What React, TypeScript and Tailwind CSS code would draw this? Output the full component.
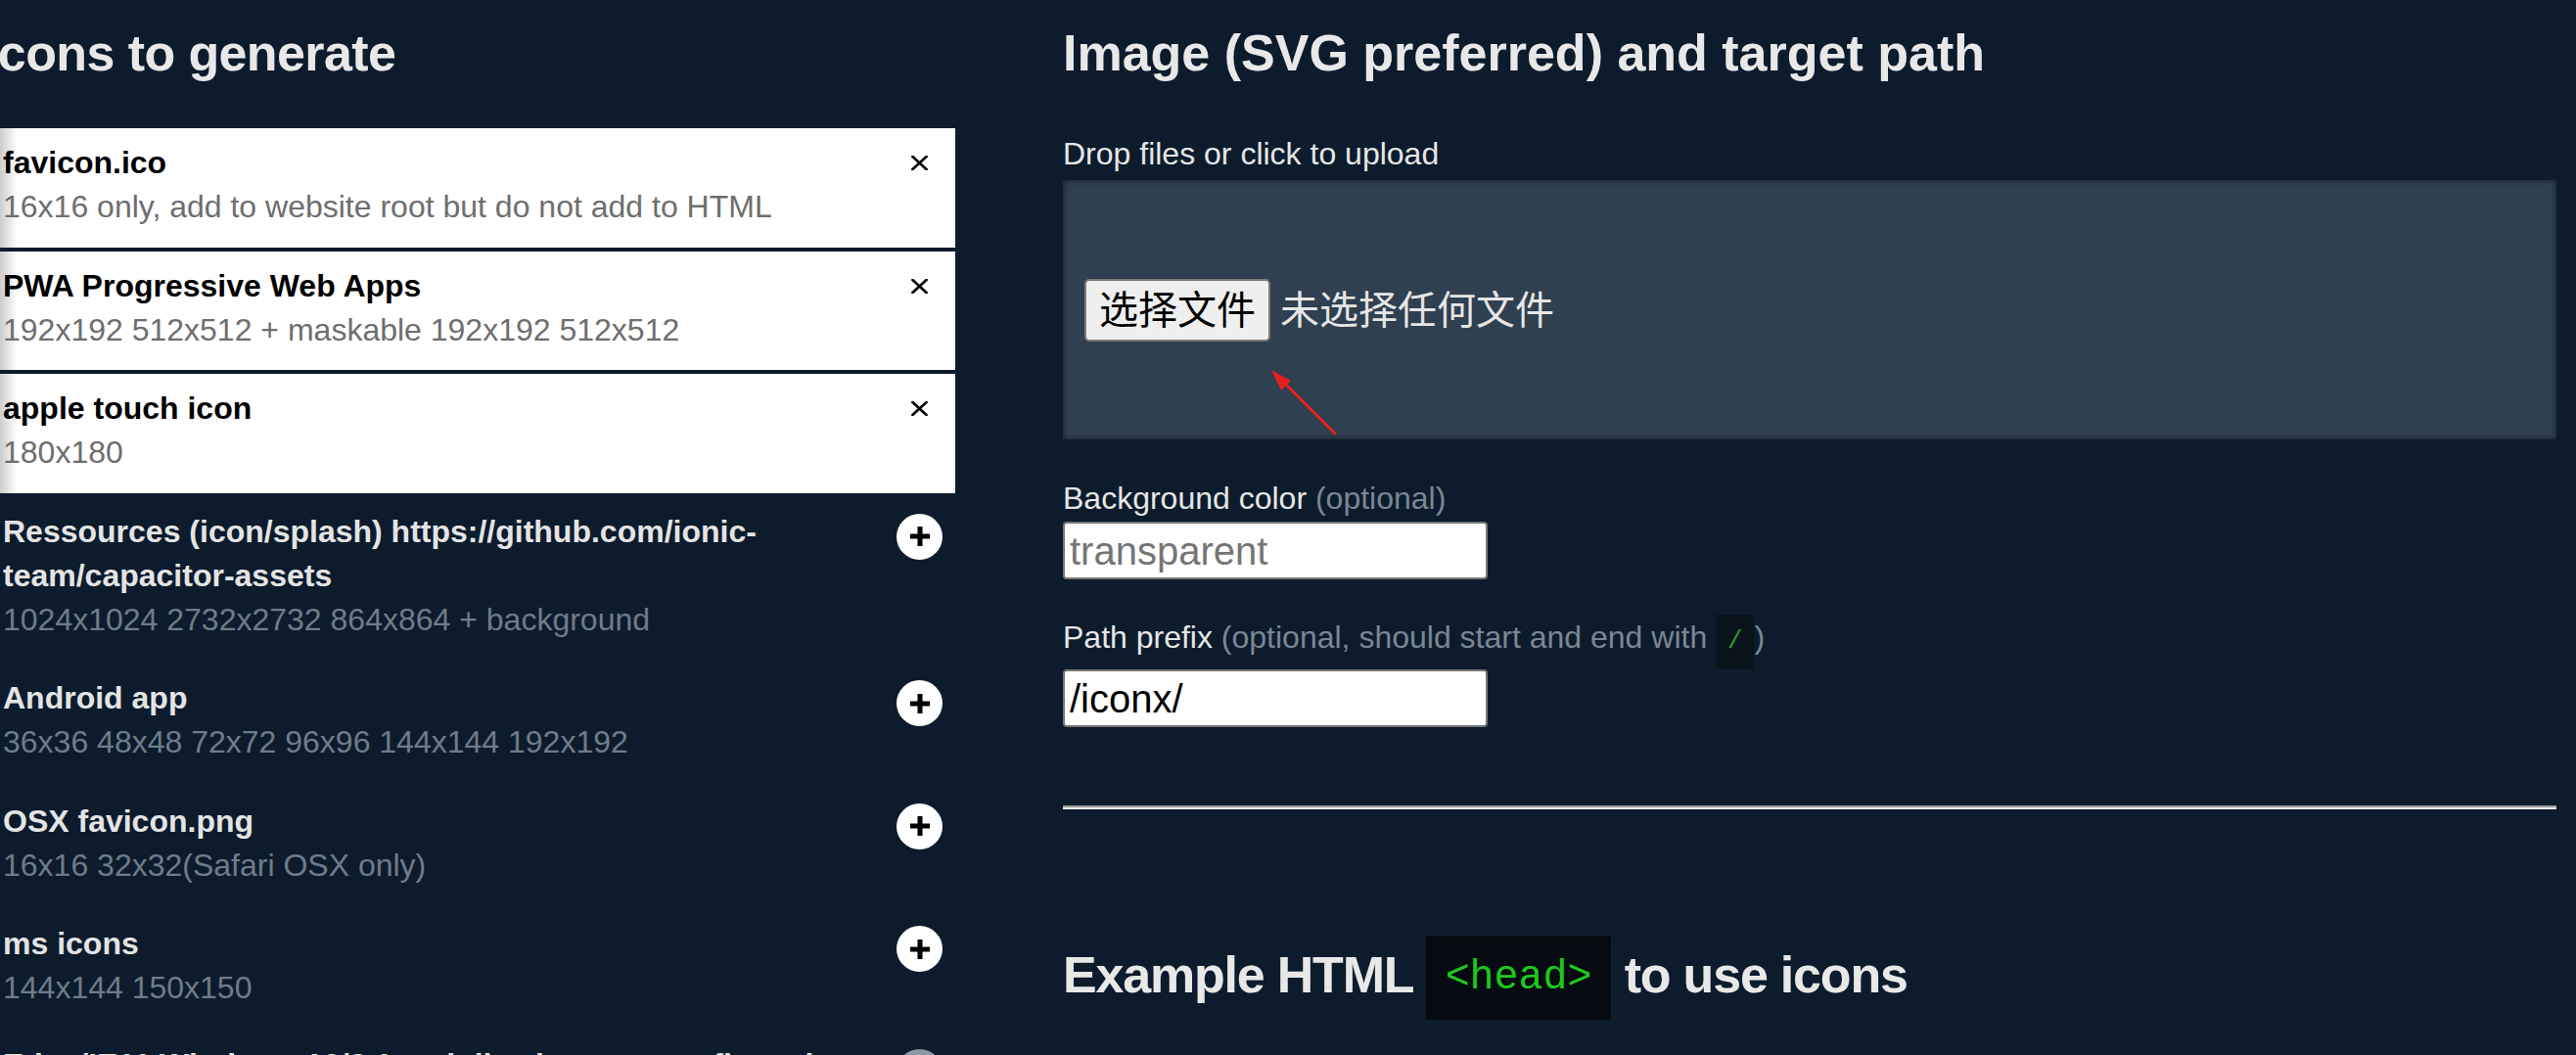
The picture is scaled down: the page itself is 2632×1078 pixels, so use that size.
import React from "react";

type IconSet = {
  title: string;
  sub: string;
  selected?: boolean;
  disabled?: boolean;
};

const iconSets: IconSet[] = [
  { title: "favicon.ico", sub: "16x16 only, add to website root but do not add to HTML", selected: true },
  { title: "PWA Progressive Web Apps", sub: "192x192 512x512 + maskable 192x192 512x512", selected: true },
  { title: "apple touch icon", sub: "180x180", selected: true },
  {
    title: "Ressources (icon/splash) https://github.com/ionic-team/capacitor-assets",
    sub: "1024x1024 2732x2732 864x864 + background",
  },
  { title: "Android app", sub: "36x36 48x48 72x72 96x96 144x144 192x192" },
  { title: "OSX favicon.png", sub: "16x16 32x32(Safari OSX only)" },
  { title: "ms icons", sub: "144x144 150x150" },
  { title: "Edge/IE11 Windows 10/8.1 tasktiles browserconfig.xml", sub: "70x70 150x150 310x150 310x310", disabled: true },
];

function CloseIcon() {
  return (
    <svg width="17" height="15" viewBox="0 0 17 15" className="block">
      <path d="M1.5 1 L15.5 14 M15.5 1 L1.5 14" stroke="#000" strokeWidth="2.6" strokeLinecap="square" />
    </svg>
  );
}

function PlusCircle({ disabled }: { disabled?: boolean }) {
  return (
    <div
      className={`w-[47px] h-[47px] rounded-full flex items-center justify-center ${
        disabled ? "bg-[#8d99a4]" : "bg-white"
      }`}
    >
      <svg width="20" height="20" viewBox="0 0 20 20">
        <path d="M10 0 V20 M0 10 H20" stroke="#000" strokeWidth="5" />
      </svg>
    </div>
  );
}

function IconSetRow({ item }: { item: IconSet }) {
  const card = item.selected;
  return (
    <div
      className={`flex pl-[19px] pr-[13px] pt-[13px] pb-[18.5px] ${
        card ? "bg-[linear-gradient(to_right,#cdcdcd_16px,#ffffff_34px)]" : ""
      }`}
    >
      <div className={`flex-1 min-w-0 pr-[24px] text-[32px] leading-[45px] ${item.disabled ? "-mt-[2px]" : ""}`}>
        <div className={`font-bold ${card ? "text-black" : "text-[#e4e4e4]"}`}>{item.title}</div>
        <div className={card ? "text-[#6e6e6e]" : "text-[#6f7c89]"}>{item.sub}</div>
      </div>
      {card ? (
        <div className="w-[47px] flex justify-center pt-[15px]">
          <CloseIcon />
        </div>
      ) : (
        <div className="w-[47px] pt-[4px]">
          <PlusCircle disabled={item.disabled} />
        </div>
      )}
    </div>
  );
}

export default function App() {
  return (
    <div className="w-[2632px] h-[1078px] overflow-hidden bg-[#0c1c2d] font-['Liberation_Sans','Noto_Sans_CJK_SC',sans-serif]">
      <div className="flex items-start pt-[24px]">
        {/* left column: icon sets */}
        <div className="w-[992px] -ml-[16px] shrink-0">
          <h2 className="text-[52px] font-bold leading-[60px] tracking-[-0.6px] text-[#e8e8e8] whitespace-nowrap">
            Icons to generate
          </h2>
          <div className="mt-[47px] flex flex-col gap-[4px]">
            {iconSets.map((item) => (
              <IconSetRow key={item.title} item={item} />
            ))}
          </div>
        </div>

        {/* right column: upload form */}
        <div className="relative w-[1526px] shrink-0 ml-[110px]">
          <h2 className="text-[52px] font-bold leading-[60px] text-[#e8e8e8] whitespace-nowrap">
            Image (SVG preferred) and target path
          </h2>

          <div className="mt-[51px] text-[32px] leading-[44px] text-[#e6e6e6]">Drop files or click to upload</div>
          <div className="mt-[5px] h-[265px] bg-[#2f4050] shadow-[inset_0_0_6px_rgba(0,0,0,0.6)] flex items-center pl-[22px]">
            <span className="h-[64px] w-[190px] rounded-[5px] border-2 border-[#7a7a7a] bg-[#efefef] text-black text-[40px] flex items-center justify-center">
              选择文件
            </span>
            <span className="ml-[10px] text-[40px] text-[#e6e6e6]">未选择任何文件</span>
          </div>

          <div className="mt-[38px] text-[32px] leading-[44px] text-[#e6e6e6]">
            Background color <span className="text-[#7b8793]">(optional)</span>
          </div>
          <div className="mt-[2px] w-[434px] h-[59px] rounded-[4px] border-2 border-[#767676] bg-white flex items-center pl-[5px] text-[40px] text-[#757575]">
            transparent
          </div>

          <div className="mt-[36px] text-[32px] leading-[44px] text-[#e6e6e6]">
            Path prefix{" "}
            <span className="text-[#7b8793]">
              (optional, should start and end with{" "}
              <code className="inline-block bg-[#09131b] text-[#2e9b3a] font-['Liberation_Mono',monospace] text-[25.6px] leading-[32px] px-[12px] py-[12px]">
                /
              </code>
              )
            </span>
          </div>
          <div className="w-[434px] h-[59px] rounded-[4px] border-2 border-[#767676] bg-white flex items-center pl-[5px] text-[40px] text-black">
            /iconx/
          </div>

          <hr className="mt-[80px] border-0 border-t-2 border-t-[#9a9a9a] border-b-2 border-b-[#ededed]" />

          <h2 className="mt-[129px] text-[52px] font-bold leading-[60px] tracking-[-1.2px] text-[#e8e8e8] whitespace-nowrap">
            Example HTML{" "}
            <code className="inline-block align-[4px] tracking-normal bg-[#050b10] text-[#1ec81e] font-['Liberation_Mono',monospace] font-normal text-[41.6px] leading-[46px] p-[20px]">
              &lt;head&gt;
            </code>{" "}
            to use icons
          </h2>

          {/* red annotation arrow */}
          <svg className="absolute left-[204px] top-[346px]" width="80" height="80" viewBox="0 0 80 80">
            <path d="M74 73 L22 21" stroke="#e5201c" strokeWidth="3" strokeLinecap="round" />
            <polygon points="9,8 29,19 19,29" fill="#e5201c" />
          </svg>
        </div>
      </div>
    </div>
  );
}
